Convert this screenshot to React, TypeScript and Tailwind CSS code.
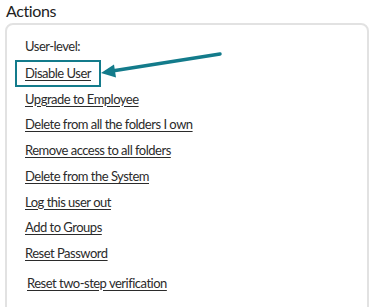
const items = [
  "Upgrade to Employee",
  "Delete from all the folders I own",
  "Remove access to all folders",
  "Delete from the System",
  "Log this user out",
  "Add to Groups",
  "Reset Password",
];

export default function App() {
  return (
    <div
      className="relative h-[307px] overflow-hidden bg-white text-[#2b2b2b]"
      style={{ fontFamily: "Lato, 'Liberation Sans', sans-serif" }}
    >
      <h2 className="pl-[6px] pt-[1px] text-[16px] leading-[20px] tracking-[-0.4px] text-[#222]">Actions</h2>
      <div className="ml-[5px] mr-[5px] mt-[2px] rounded-[8px] border-2 border-[#e2e2e2] pl-[18px] pt-[9px] pb-10 text-[13px] tracking-[-0.5px]">
        <div className="leading-[25.7px]">User-level:</div>
        <div className="-ml-[10px] inline-block border-2 border-[#137b8b] px-[8px] leading-[23px]">
          <a className="underline underline-offset-2">Disable User</a>
        </div>
        {items.map((t) => (
          <div key={t} className="leading-[25.7px]">
            <a className="underline underline-offset-2">{t}</a>
          </div>
        ))}
        <div className="mt-[4px] pl-[2px] leading-[25.7px]">
          <a className="underline underline-offset-2">Reset two-step verification</a>
        </div>
      </div>
      <svg className="absolute left-0 top-0" width="374" height="307" viewBox="0 0 374 307">
        <line x1="220" y1="54" x2="112" y2="71" stroke="#137b8b" strokeWidth="3.5" strokeLinecap="round" />
        <polygon points="101,73 114,64.5 116,77.5" fill="#137b8b" />
      </svg>
    </div>
  );
}
